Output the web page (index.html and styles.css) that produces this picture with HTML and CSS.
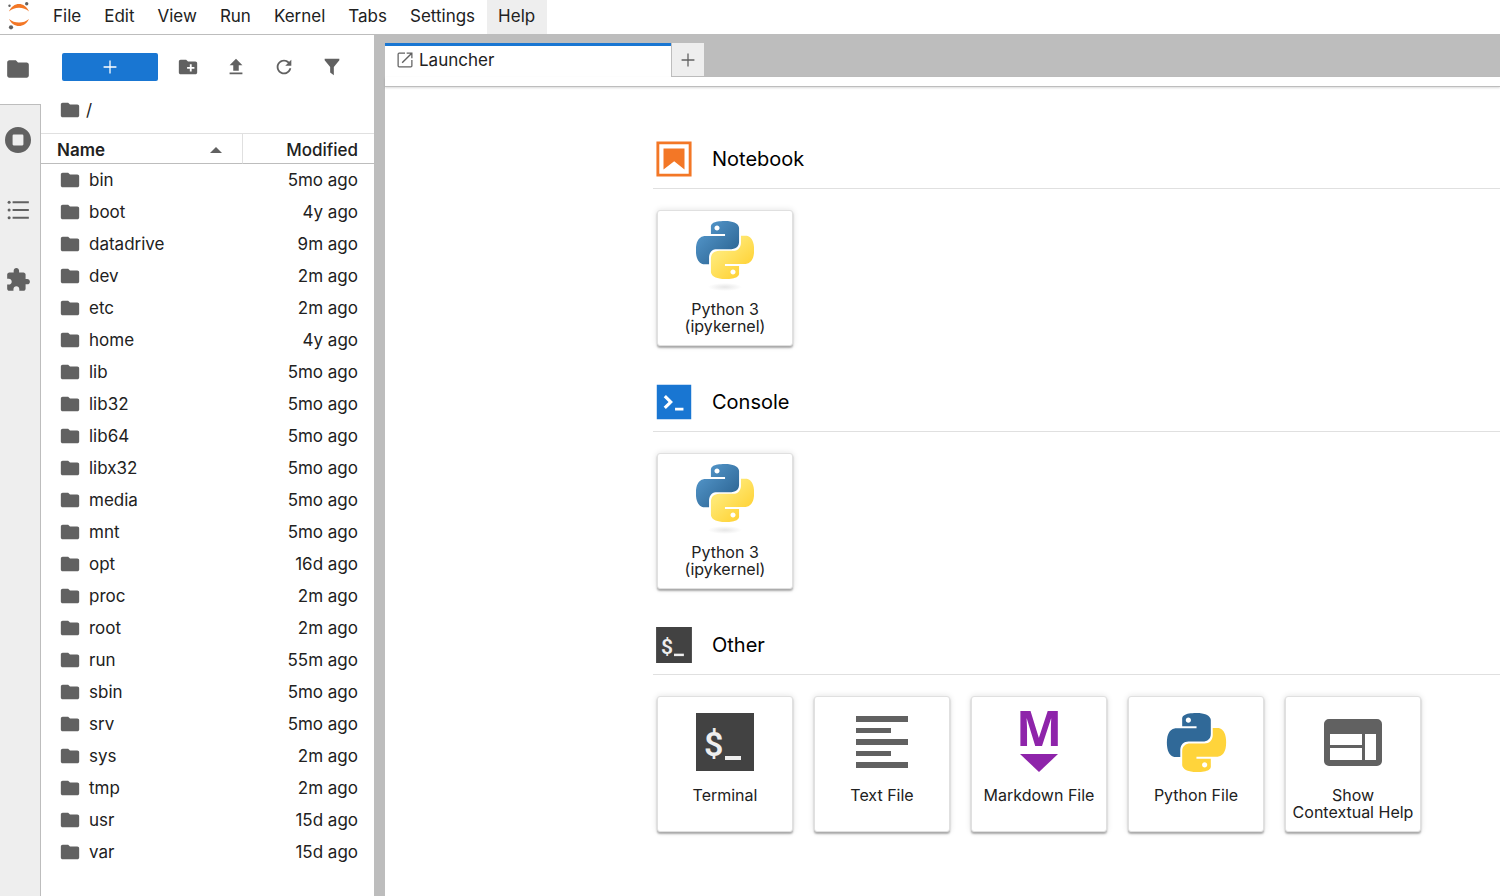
FILE: index.html
```html
<!DOCTYPE html>
<html lang="en">
<head>
  <meta charset="UTF-8">
  <title>JupyterLab</title>
  <link rel="stylesheet" href="styles.css">
</head>
<body>
  <!-- Shared icons -->
  <svg class="defs" width="0" height="0" aria-hidden="true">
    <linearGradient id="pyBlue" x1="0" y1="0" x2="0.8" y2="0.8">
      <stop offset="0" stop-color="#5a9fd4"/><stop offset="1" stop-color="#306998"/>
    </linearGradient>
    <linearGradient id="pyYellow" x1="0.3" y1="0.3" x2="0.75" y2="0.8">
      <stop offset="0" stop-color="#ffe873"/><stop offset="1" stop-color="#ffd43b"/>
    </linearGradient>
    <radialGradient id="pyShadow">
      <stop offset="0" stop-color="#b8b8b8" stop-opacity="0.35"/><stop offset="1" stop-color="#b8b8b8" stop-opacity="0"/>
    </radialGradient>
    <symbol id="folder" viewBox="0 0 24 24">
      <path d="M10 4H4c-1.1 0-1.99.9-1.99 2L2 18c0 1.1.9 2 2 2h16c1.1 0 2-.9 2-2V8c0-1.1-.9-2-2-2h-8l-2-2z"/>
    </symbol>
    <symbol id="plus" viewBox="0 0 24 24">
      <path d="M19 12.700h-6.300V19h-1.400v-6.300H5v-1.400h6.300V5h1.400v6.300H19z"/>
    </symbol>
    <path id="pyTop" d="M14.25.18l.9.2.73.26.59.3.45.32.34.34.25.34.16.33.1.3.04.26.02.2-.01.13V8.5l-.05.63-.13.55-.21.46-.26.38-.3.31-.33.25-.35.19-.35.14-.33.1-.3.07-.26.04-.21.02H8.77l-.69.05-.59.14-.5.22-.41.27-.33.32-.27.35-.2.36-.15.37-.1.35-.07.32-.04.27-.02.21v3.06H3.17l-.21-.03-.28-.07-.32-.12-.35-.18-.36-.26-.36-.36-.35-.46-.32-.59-.28-.73-.21-.88-.14-1.05-.05-1.23.06-1.22.16-1.04.24-.87.32-.71.36-.57.4-.44.42-.33.42-.24.4-.16.36-.1.32-.05.24-.01h.16l.06.01h8.16v-.83H6.18l-.01-2.75-.02-.37.05-.34.11-.31.17-.28.25-.26.31-.23.38-.2.44-.18.51-.15.58-.12.64-.1.71-.06.77-.04.84-.02 1.27.05zm-6.3 1.98l-.23.33-.08.41.08.41.23.34.33.22.41.09.41-.09.33-.22.23-.34.08-.41-.08-.41-.23-.33-.33-.22-.41-.09-.41.09z"/>
    <path id="pyBottom" d="M21.04 6.11l.28.06.32.12.35.18.36.27.36.35.35.47.32.59.28.73.21.88.14 1.04.05 1.23-.06 1.23-.16 1.04-.24.86-.32.71-.36.57-.4.45-.42.33-.42.24-.4.16-.36.09-.32.05-.24.02-.16-.01h-8.22v.82h5.84l.01 2.76.02.36-.05.34-.11.31-.17.29-.25.25-.31.24-.38.2-.44.17-.51.15-.58.13-.64.09-.71.07-.77.04-.84.01-1.27-.04-1.07-.14-.9-.2-.73-.25-.59-.3-.45-.33-.34-.34-.25-.34-.16-.33-.1-.3-.04-.25-.02-.2.01-.13v-5.34l.05-.64.13-.54.21-.46.26-.38.3-.32.33-.24.35-.2.35-.14.33-.1.3-.06.26-.04.21-.02.13-.01h5.84l.69-.05.59-.14.5-.21.41-.28.33-.32.27-.35.2-.36.15-.36.1-.35.07-.32.04-.28.02-.21V6.07h2.09l.14.01zm-6.47 14.25l-.23.33-.08.41.08.41.23.33.33.23.41.08.41-.08.33-.23.23-.33.08-.41-.08-.41-.23-.33-.33-.23-.41-.08-.41.08z"/>
    <symbol id="kernel" viewBox="0 0 58 70">
      <g transform="scale(2.4167)">
        <use href="#pyTop" fill="url(#pyBlue)"/>
        <use href="#pyBottom" fill="url(#pyYellow)"/>
      </g>
      <ellipse cx="29" cy="66" rx="17" ry="4" fill="url(#pyShadow)"/>
    </symbol>
  </svg>

  <header class="menubar">
    <svg class="logo" viewBox="0 0 32 34" width="32" height="34">
      <path fill="#f37726" d="M9 11.5C11 6.500 15 4 19 4s8 2.500 10 7.500C26 8.800 23 7.700 19 7.700S12 8.800 9 11.500zM9 19c2 4.500 6 7 10 7s8-2.500 10-7c-3 2.500-6 3.500-10 3.500S12 21.500 9 19z"/>
      <circle cx="9.500" cy="5.700" r="1.200" fill="#616161"/>
      <circle cx="26.700" cy="3.700" r="1.700" fill="#616161"/>
      <circle cx="11" cy="27.300" r="2.100" fill="#616161"/>
    </svg>
    <nav class="menus">
      <button>File</button>
      <button>Edit</button>
      <button>View</button>
      <button>Run</button>
      <button>Kernel</button>
      <button>Tabs</button>
      <button>Settings</button>
      <button class="active">Help</button>
    </nav>
  </header>

  <div class="workspace">
    <!-- Activity bar -->
    <nav class="activity">
      <button class="current" aria-label="File Browser"><svg><use href="#folder"/></svg></button>
      <button aria-label="Running Terminals and Kernels"><svg viewBox="0 0 24 24"><path fill-rule="evenodd" d="M12 0a12 12 0 100 24 12 12 0 000-24zM8 7h8a1 1 0 011 1v8a1 1 0 01-1 1H8a1 1 0 01-1-1V8a1 1 0 011-1z"/></svg></button>
      <button aria-label="Table of Contents"><svg viewBox="0 0 24 24"><path d="M7 4h15v1.800H7zm0 7.100h15v1.800H7zm0 7.100h15V20H7z"/><circle cx="3.800" cy="4.900" r="1.400"/><circle cx="3.800" cy="12" r="1.400"/><circle cx="3.800" cy="19.100" r="1.400"/></svg></button>
      <button aria-label="Extension Manager"><svg viewBox="0 0 24 24"><path d="M20.500 11H19V7c0-1.100-.9-2-2-2h-4V3.500C13 2.120 11.880 1 10.500 1S8 2.120 8 3.500V5H4c-1.100 0-1.990.9-1.990 2v3.800H3.500c1.490 0 2.700 1.210 2.700 2.700s-1.210 2.700-2.700 2.700H2V20c0 1.100.9 2 2 2h3.800v-1.500c0-1.490 1.210-2.700 2.700-2.700 1.490 0 2.700 1.210 2.700 2.700V22H17c1.100 0 2-.9 2-2v-4h1.500c1.380 0 2.500-1.120 2.500-2.500S21.880 11 20.500 11z"/></svg></button>
    </nav>

    <!-- File browser -->
    <aside class="browser">
      <div class="toolbar">
        <button class="new" aria-label="New Launcher"><svg><use href="#plus"/></svg></button>
        <button class="tool" aria-label="New Folder"><svg viewBox="0 0 24 24"><path d="M20 6h-8l-2-2H4c-1.110 0-1.990.89-1.990 2L2 18c0 1.110.89 2 2 2h16c1.110 0 2-.89 2-2V8c0-1.110-.89-2-2-2zm-1 8h-3v3h-2v-3h-3v-2h3V9h2v3h3v2z"/></svg></button>
        <button class="tool" aria-label="Upload Files"><svg viewBox="0 0 24 24"><path d="M9 16h6v-6h4l-7-7-7 7h4zm-4 2h14v2H5z"/></svg></button>
        <button class="tool" aria-label="Refresh"><svg viewBox="0 0 18 18"><path d="M9 13.500c-2.490 0-4.500-2.010-4.500-4.500S6.510 4.500 9 4.500c1.240 0 2.360.52 3.170 1.330L10 8h5V3l-1.760 1.760C12.150 3.680 10.660 3 9 3 5.690 3 3.010 5.690 3.010 9S5.690 15 9 15c2.970 0 5.430-2.160 5.900-5h-1.520c-.46 2-2.240 3.500-4.380 3.500z"/></svg></button>
        <button class="tool" aria-label="Filter"><svg viewBox="0 0 24 24"><path d="M14 12v9l-4-3v-6L4 4.500V3h16v1.500z"/></svg></button>
      </div>
      <div class="crumbs"><svg><use href="#folder"/></svg><a href="#">/</a></div>
      <table class="files">
        <thead>
          <tr>
            <th class="name"><div>Name <svg class="caret" viewBox="0 0 12 6"><path d="M0 6l6-6 6 6z"/></svg></div></th>
            <th class="modified">Modified</th>
          </tr>
        </thead>
        <tbody id="files"></tbody>
      </table>
    </aside>

    <!-- Launcher -->
    <main class="dock">
      <div class="tabs">
        <div class="tab"><svg viewBox="0 0 24 24"><path d="M19 19.500H4.500V4.500H12V3H5a2 2 0 00-2 2v14a2 2 0 002 2h14c1.100 0 2-.9 2-2v-7h-1.500v7.500zM14 3v1.500h4.300L8 14.800 9.200 16 19.500 5.700V10H21V3h-7z"/></svg>Launcher</div>
        <button class="add" aria-label="New tab"><svg><use href="#plus"/></svg></button>
      </div>
      <div class="strip"></div>
      <div class="launcher">
        <section>
          <h2><svg viewBox="0 0 22 22"><path fill="#f37726" d="M18.700 3.300v15.400H3.300V3.300h15.400m1.500-1.500H1.800v18.400h18.400z"/><path fill="#f37726" d="M16.500 16.500l-5.400-4.300-5.600 4.300v-11h11z"/></svg>Notebook</h2>
          <div class="cards">
            <button class="card"><span class="icon"><svg width="58" height="70"><use href="#kernel"/></svg></span>Python 3<br>(ipykernel)</button>
          </div>
        </section>
        <section>
          <h2><svg viewBox="0 0 200 200"><path fill="#1976d2" d="M18 18h164v164H18z"/><path fill="#fff" d="M105 127.300h40v12.800h-40zM51.100 77L74 99.900l-23.300 23.300 10.500 10.500 23.300-23.300L95 99.900 84.500 89.400 61.600 66.500z"/></svg>Console</h2>
          <div class="cards">
            <button class="card"><span class="icon"><svg width="58" height="70"><use href="#kernel"/></svg></span>Python 3<br>(ipykernel)</button>
          </div>
        </section>
        <section>
          <h2><svg viewBox="-5 -5 68 68"><path fill="#424242" d="M0 0h58v58H0z"/><text class="dollar" x="8" y="43">$</text><path fill="#eee" d="M29 43h16v4H29z"/></svg>Other</h2>
          <div class="cards">
            <button class="card"><span class="icon"><svg width="58" height="58" viewBox="0 0 58 58"><path fill="#424242" d="M0 0h58v58H0z"/><text class="dollar" x="8" y="43">$</text><path fill="#eee" d="M29 43h16v4H29z"/></svg></span>Terminal</button>
            <button class="card"><span class="icon"><svg width="58" height="58" viewBox="0 0 58 58"><path fill="#616161" d="M3 3h52v6H3zm0 12h35v5H3zm0 11h52v6H3zm0 12h35v5H3zm0 11h52v6H3z"/></svg></span>Text File</button>
            <button class="card"><span class="icon"><svg width="58" height="64" viewBox="0 0 58 64"><text class="mark" x="29" y="36">M</text><path fill="#8e24aa" d="M10 44h38L29 62z"/></svg></span>Markdown File</button>
            <button class="card"><span class="icon"><svg width="59" height="59" viewBox="0 0 24 24"><use href="#pyTop" fill="#306998"/><use href="#pyBottom" fill="#ffd43b"/></svg></span>Python File</button>
            <button class="card"><span class="icon"><svg width="58" height="58" viewBox="0 0 58 58"><path fill="#616161" fill-rule="evenodd" d="M5 6h48a5 5 0 015 5v37a5 5 0 01-5 5H5a5 5 0 01-5-5V11a5 5 0 015-5zm1 15v11h32V21zm0 14v12h32V35zm35-14v26h11V21z"/></svg></span>Show<br>Contextual Help</button>
          </div>
        </section>
      </div>
    </main>
  </div>

  <script src="files.js"></script>
</body>
</html>
```

FILE: files.js
```js
const files = [
  ["bin", "5mo ago"],
  ["boot", "4y ago"],
  ["datadrive", "9m ago"],
  ["dev", "2m ago"],
  ["etc", "2m ago"],
  ["home", "4y ago"],
  ["lib", "5mo ago"],
  ["lib32", "5mo ago"],
  ["lib64", "5mo ago"],
  ["libx32", "5mo ago"],
  ["media", "5mo ago"],
  ["mnt", "5mo ago"],
  ["opt", "16d ago"],
  ["proc", "2m ago"],
  ["root", "2m ago"],
  ["run", "55m ago"],
  ["sbin", "5mo ago"],
  ["srv", "5mo ago"],
  ["sys", "2m ago"],
  ["tmp", "2m ago"],
  ["usr", "15d ago"],
  ["var", "15d ago"]
];

document.getElementById("files").innerHTML = files.map(([name, modified]) =>
  `<tr><td class="name"><div><svg><use href="#folder"/></svg>${name}</div></td><td class="modified">${modified}</td></tr>`
).join("");
```

FILE: styles.css
```css
* { box-sizing: border-box; }
body {
  margin: 0;
  height: 100vh;
  display: flex;
  flex-direction: column;
  overflow: hidden;
  font-family: Inter, "Liberation Sans", sans-serif;
  font-size: 17px;
  color: #212121;
  background: #fff;
}
button {
  font: inherit;
  color: inherit;
  background: none;
  border: none;
  padding: 0;
  cursor: pointer;
}
svg { display: block; flex: none; fill: #616161; overflow: visible; }
.defs { position: absolute; }

/* Menu bar */
.menubar { display: flex; height: 35px; border-bottom: 1px solid #bdbdbd; }
.logo { margin-right: 10px; }
.menus { display: flex; }
.menus button { padding: 0 12px 2px 11px; }
.menus .active { background: #eee; }

.workspace { flex: 1; display: flex; min-height: 0; }

/* Activity bar */
.activity { width: 41px; display: flex; flex-direction: column; background: #eee; }
.activity button {
  height: 70px;
  padding-left: 5px;
  border-right: 1px solid #bdbdbd;
}
.activity .current { padding-bottom: 1px; background: #fff; border-right: none; border-bottom: 1px solid #bdbdbd; }
.activity svg { width: 26px; height: 26px; }
.activity::after { content: ""; flex: 1; border-right: 1px solid #bdbdbd; }

/* File browser */
.browser { width: 333px; }
.browser svg { width: 22px; height: 22px; }
.toolbar { display: flex; align-items: center; padding: 18px 0 0 21px; }
.new {
  display: flex;
  justify-content: center;
  align-items: center;
  width: 96px;
  height: 28px;
  margin-right: 6px;
  border-radius: 2px;
  background: #1976d2;
}
.new svg { fill: #fff; }
.tool { width: 48px; display: flex; justify-content: center; }
.crumbs { display: flex; align-items: center; gap: 5px; height: 52px; padding: 6px 0 0 18px; }
.crumbs a { color: inherit; text-decoration: none; }
.files { width: 100%; border-collapse: separate; border-spacing: 0; table-layout: fixed; }
.files th {
  height: 31px;
  padding: 2px 16px 0;
  border-top: 1px solid #e0e0e0;
  border-bottom: 1px solid #bdbdbd;
  font-weight: 500;
  text-align: left;
}
.files th.name { width: 202px; font-weight: 600; border-right: 1px solid #e0e0e0; }
.files th.name div { display: flex; align-items: center; justify-content: space-between; }
.files .caret { width: 12px; height: 6px; margin-right: 4px; }
.files td { height: 32px; padding: 0 16px 0 18px; }
.files td div { display: flex; align-items: center; gap: 8px; }
.files .modified { text-align: right; }

/* Dock */
.dock {
  flex: 1;
  min-width: 0;
  display: flex;
  flex-direction: column;
  border-left: 11px solid #bdbdbd;
}
.tabs { display: flex; height: 42px; padding-top: 8px; background: #bdbdbd; }
.tab {
  display: flex;
  align-items: center;
  gap: 4px;
  width: 286px;
  padding: 0 0 3px 10px;
  border-top: 3px solid #1976d2;
  background: #fff;
}
.tab svg { width: 20px; height: 20px; }
.add {
  display: flex;
  align-items: center;
  justify-content: center;
  width: 33px;
  height: 34px;
  border: solid #bdbdbd;
  border-width: 0 0 1px 1px;
  background: #eee;
}
.add svg { width: 22px; height: 22px; }
.strip { height: 10px; border-bottom: 1px solid #bdbdbd; box-shadow: 0 1px 2px rgba(0, 0, 0, 0.15); }
.launcher { flex: 1; padding: 42px 0 0 268px; overflow: hidden; }
.launcher section { padding-bottom: 26px; }
.launcher h2 {
  display: flex;
  align-items: center;
  gap: 17px;
  height: 60px;
  margin: 0 0 21px;
  border-bottom: 1px solid #e0e0e0;
  font-size: 20px;
  font-weight: 400;
  color: #000;
}
.launcher h2 svg { width: 42px; height: 42px; }
.cards { display: flex; gap: 21px; padding-left: 4px; }
.card {
  display: flex;
  flex-direction: column;
  align-items: center;
  width: 136px;
  height: 136px;
  border: 1px solid #e0e0e0;
  border-radius: 3px;
  background: #fff;
  box-shadow: 0 2px 2px rgba(0, 0, 0, 0.3), 0 0 6px rgba(0, 0, 0, 0.12);
  font-size: 16px;
  line-height: 17px;
  text-align: center;
}
.icon { display: flex; align-items: center; height: 90px; }
.dollar { font: 600 34px Roboto, sans-serif; fill: #eee; }
.mark { font: 700 49px "Open Sans", sans-serif; fill: #8e24aa; text-anchor: middle; }
```
